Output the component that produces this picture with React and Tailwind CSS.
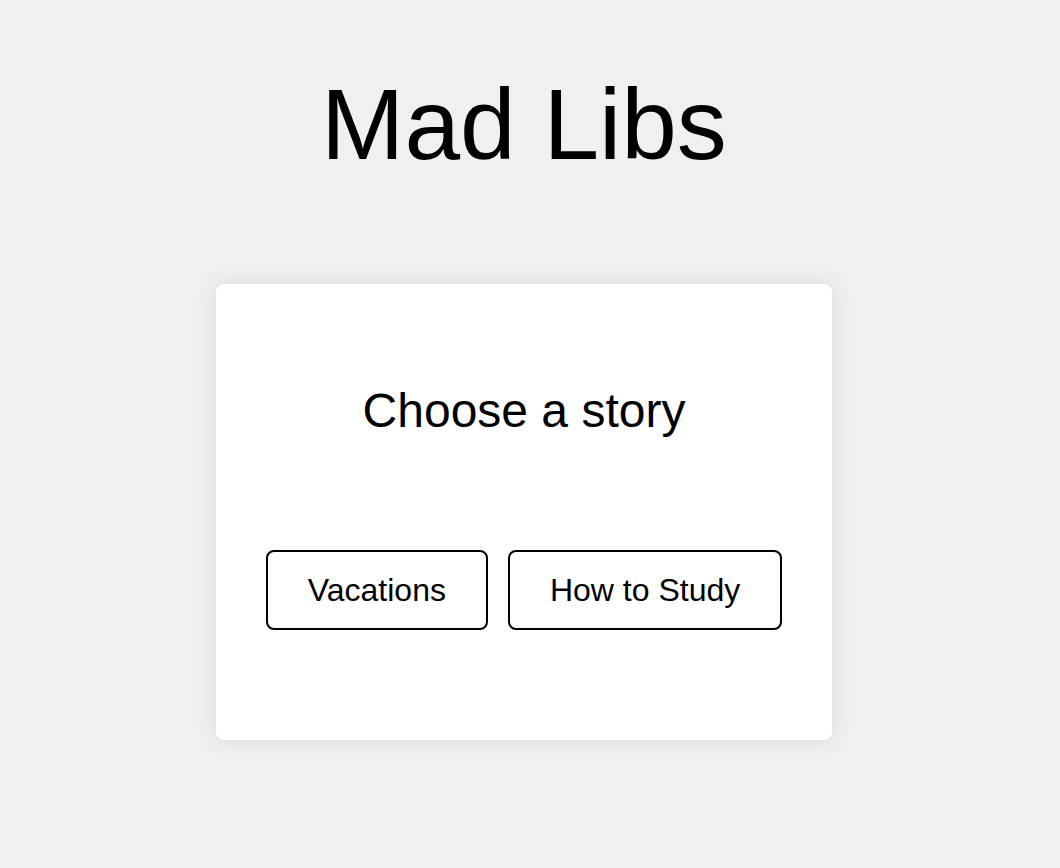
const stories = ["Vacations", "How to Study"];

export default function App() {
  return (
    <div className="min-h-[868px] w-full bg-[#f0f0f0] text-black font-['Liberation_Sans',Arial,sans-serif]">
      <div className="w-[1048px] flex flex-col items-center">
        <h1 className="mt-[67px] text-[100px] leading-[115px] font-normal">Mad Libs</h1>
        <div className="mt-[102px] w-[616px] h-[456px] bg-white rounded-lg shadow-[0_0_20px_rgba(0,0,0,0.1)] flex flex-col items-center pt-[99px]">
          <h2 className="text-[48px] leading-[55px] font-normal">Choose a story</h2>
          <div className="mt-[112px] flex gap-5">
            {stories.map((s) => (
              <button
                key={s}
                className="bg-white border-2 border-black rounded-lg px-10 pt-5 pb-[20px] text-[32px] leading-[36px] text-black"
              >
                {s}
              </button>
            ))}
          </div>
        </div>
      </div>
    </div>
  );
}
